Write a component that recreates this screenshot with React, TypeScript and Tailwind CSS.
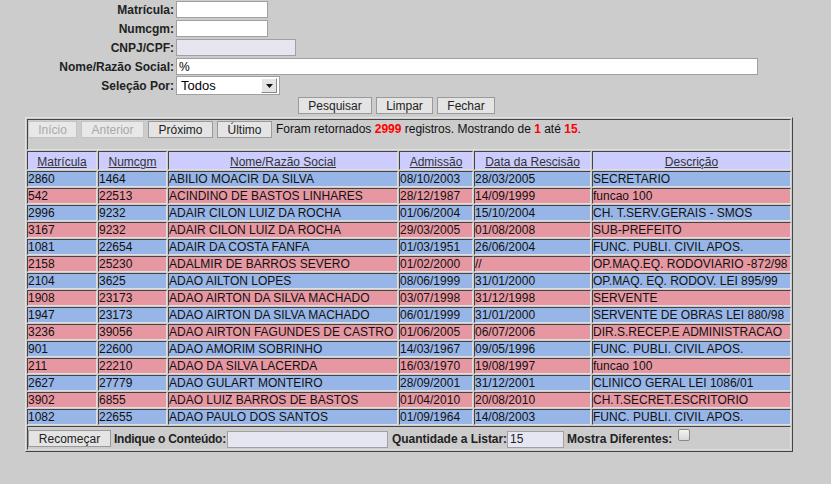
import React from 'react';

type Row = [string, string, string, string, string, string];

const rows: Row[] = [
  ['2860', '1464', 'ABILIO MOACIR DA SILVA', '08/10/2003', '28/03/2005', 'SECRETARIO'],
  ['542', '22513', 'ACINDINO DE BASTOS LINHARES', '28/12/1987', '14/09/1999', 'funcao 100'],
  ['2996', '9232', 'ADAIR CILON LUIZ DA ROCHA', '01/06/2004', '15/10/2004', 'CH. T.SERV.GERAIS - SMOS'],
  ['3167', '9232', 'ADAIR CILON LUIZ DA ROCHA', '29/03/2005', '01/08/2008', 'SUB-PREFEITO'],
  ['1081', '22654', 'ADAIR DA COSTA FANFA', '01/03/1951', '26/06/2004', 'FUNC. PUBLI. CIVIL APOS.'],
  ['2158', '25230', 'ADALMIR DE BARROS SEVERO', '01/02/2000', '//', 'OP.MAQ.EQ. RODOVIARIO -872/98'],
  ['2104', '3625', 'ADAO AILTON LOPES', '08/06/1999', '31/01/2000', 'OP.MAQ. EQ. RODOV. LEI 895/99'],
  ['1908', '23173', 'ADAO AIRTON DA SILVA MACHADO', '03/07/1998', '31/12/1998', 'SERVENTE'],
  ['1947', '23173', 'ADAO AIRTON DA SILVA MACHADO', '06/01/1999', '31/01/2000', 'SERVENTE DE OBRAS LEI 880/98'],
  ['3236', '39056', 'ADAO AIRTON FAGUNDES DE CASTRO', '01/06/2005', '06/07/2006', 'DIR.S.RECEP.E ADMINISTRACAO'],
  ['901', '22600', 'ADAO AMORIM SOBRINHO', '14/03/1967', '09/05/1996', 'FUNC. PUBLI. CIVIL APOS.'],
  ['211', '22210', 'ADAO DA SILVA LACERDA', '16/03/1970', '19/08/1997', 'funcao 100'],
  ['2627', '27779', 'ADAO GULART MONTEIRO', '28/09/2001', '31/12/2001', 'CLINICO GERAL LEI 1086/01'],
  ['3902', '6855', 'ADAO LUIZ BARROS DE BASTOS', '01/04/2010', '20/08/2010', 'CH.T.SECRET.ESCRITORIO'],
  ['1082', '22655', 'ADAO PAULO DOS SANTOS', '01/09/1964', '14/08/2003', 'FUNC. PUBLI. CIVIL APOS.'],
];

const headers = ['Matrícula', 'Numcgm', 'Nome/Razão Social', 'Admissão', 'Data da Rescisão', 'Descrição'];
const widths = ['w-[70px]', 'w-[69px]', 'w-[230px]', 'w-[74px]', 'w-[117px]', 'w-[199px]'];

const inset = 'border border-t-[#444] border-l-[#444] border-r-[#dedede] border-b-[#dedede]';

function Label({ children }: { children: React.ReactNode }) {
  return <div className="w-[174px] text-right text-[12px] font-bold text-[#222]">{children}</div>;
}

function Btn({ w, children, off }: { w: string; children: React.ReactNode; off?: boolean }) {
  return (
    <div
      className={`${w} h-[17px] flex items-center justify-center text-[12px] leading-none border ${
        off ? 'bg-[#e8e8e8] border-[#c4c4c4] text-[#a8a8a8]' : 'bg-[#e4e4e4] border-[#9a9a9a] text-[#222]'
      }`}
    >
      {children}
    </div>
  );
}

export default function App() {
  return (
    <div className="w-[831px] h-[484px] bg-[#cccccc] text-black [font-family:'Liberation_Sans',Arial,sans-serif]">
      {/* filtros */}
      <div className="flex flex-col">
        <div className="h-[19px] flex items-center">
          <Label>Matrícula:</Label>
          <div className="ml-[2px] w-[92px] h-[17px] bg-white border border-[#a0a0a0]" />
        </div>
        <div className="h-[19px] flex items-center">
          <Label>Numcgm:</Label>
          <div className="ml-[2px] w-[92px] h-[17px] bg-white border border-[#a0a0a0]" />
        </div>
        <div className="h-[19px] flex items-center">
          <Label>CNPJ/CPF:</Label>
          <div className="ml-[2px] w-[120px] h-[17px] bg-[#e6e6f0] border border-[#a0a0a0]" />
        </div>
        <div className="h-[19px] flex items-center">
          <Label>Nome/Razão Social:</Label>
          <div className="ml-[2px] w-[582px] h-[17px] bg-white border border-[#a0a0a0] flex items-center pl-[2px] text-[12px]">
            %
          </div>
        </div>
        <div className="h-[19px] flex items-center">
          <Label>Seleção Por:</Label>
          <div className="ml-[2px] w-[104px] h-[19px] bg-white border border-[#a0a0a0] flex items-center justify-between">
            <span className="pl-[4px] text-[13px]">Todos</span>
            <div className="w-[16px] h-[15px] mr-[2px] bg-[#e4e4e4] border border-t-white border-l-white border-r-[#888] border-b-[#888] flex items-center justify-center">
              <svg width="7" height="4" viewBox="0 0 7 4">
                <path d="M0 0h7L3.5 4z" fill="#111" />
              </svg>
            </div>
          </div>
        </div>
        <div className="mt-[1px] h-[19px] flex items-center gap-[4px] pl-[298px]">
          <Btn w="w-[74px]">Pesquisar</Btn>
          <Btn w="w-[57px]">Limpar</Btn>
          <Btn w="w-[58px]">Fechar</Btn>
        </div>
      </div>

      {/* resultado */}
      <div className="mt-[2px] ml-[25px] w-[768px] border border-t-[#e2e2e2] border-l-[#e2e2e2] border-r-[#444] border-b-[#444] p-px flex flex-col gap-px">
        <div className={`h-[31px] ${inset} flex items-start gap-[4px] pt-px text-[12px]`}>
          <Btn w="w-[49px]" off>Início</Btn>
          <Btn w="w-[63px]" off>Anterior</Btn>
          <Btn w="w-[65px]">Próximo</Btn>
          <Btn w="w-[55px]">Último</Btn>
          <span className="leading-[17px] text-[#111]">
            Foram retornados <b className="text-[#ff0000]">2999</b> registros. Mostrando de{' '}
            <b className="text-[#ff0000]">1</b> até <b className="text-[#ff0000]">15</b>.
          </span>
        </div>

        <div className="flex gap-px">
          {headers.map((h, i) => (
            <div
              key={h}
              className={`${widths[i]} h-[19px] ${inset} bg-[#ccccff] pt-[3px] text-center text-[12px] leading-[14px] text-[#333] underline`}
            >
              {h}
            </div>
          ))}
        </div>

        {rows.map((r, ri) => (
          <div key={ri} className="flex gap-px">
            {r.map((c, ci) => (
              <div
                key={ci}
                className={`${widths[ci]} h-[16px] ${inset} ${
                  ri % 2 === 0 ? 'bg-[#97b5e6]' : 'bg-[#e797a1]'
                } text-[12px] leading-[14px] text-[#111] whitespace-nowrap overflow-hidden`}
              >
                {c}
              </div>
            ))}
          </div>
        ))}

        <div className={`h-[24px] ${inset} flex items-start pt-[4px] text-[12px] font-bold text-[#222]`}>
          <div className="-mt-px">
            <Btn w="w-[83px]">
              <span className="font-normal">Recomeçar</span>
            </Btn>
          </div>
          <span className="ml-[3px] w-[113px] whitespace-nowrap tracking-[-0.25px] leading-[17px]">Indique o Conteúdo:</span>
          <div className="w-[161px] h-[17px] bg-[#e6e6f2] border border-[#a0a0a0]" />
          <span className="ml-[4px] w-[115px] whitespace-nowrap tracking-[-0.05px] leading-[17px]">Quantidade a Listar:</span>
          <div className="w-[57px] h-[17px] bg-[#e6e6f2] border border-[#a0a0a0] pl-[2px] text-[12px] font-normal leading-[15px]">
            15
          </div>
          <span className="ml-[3px] w-[111px] whitespace-nowrap leading-[17px]">Mostra Diferentes:</span>
          <div className="-mt-[2px] w-[12px] h-[12px] rounded-[2px] border border-[#888] bg-gradient-to-b from-[#f4f4f4] to-[#d8d8d8]" />
        </div>
      </div>
    </div>
  );
}
